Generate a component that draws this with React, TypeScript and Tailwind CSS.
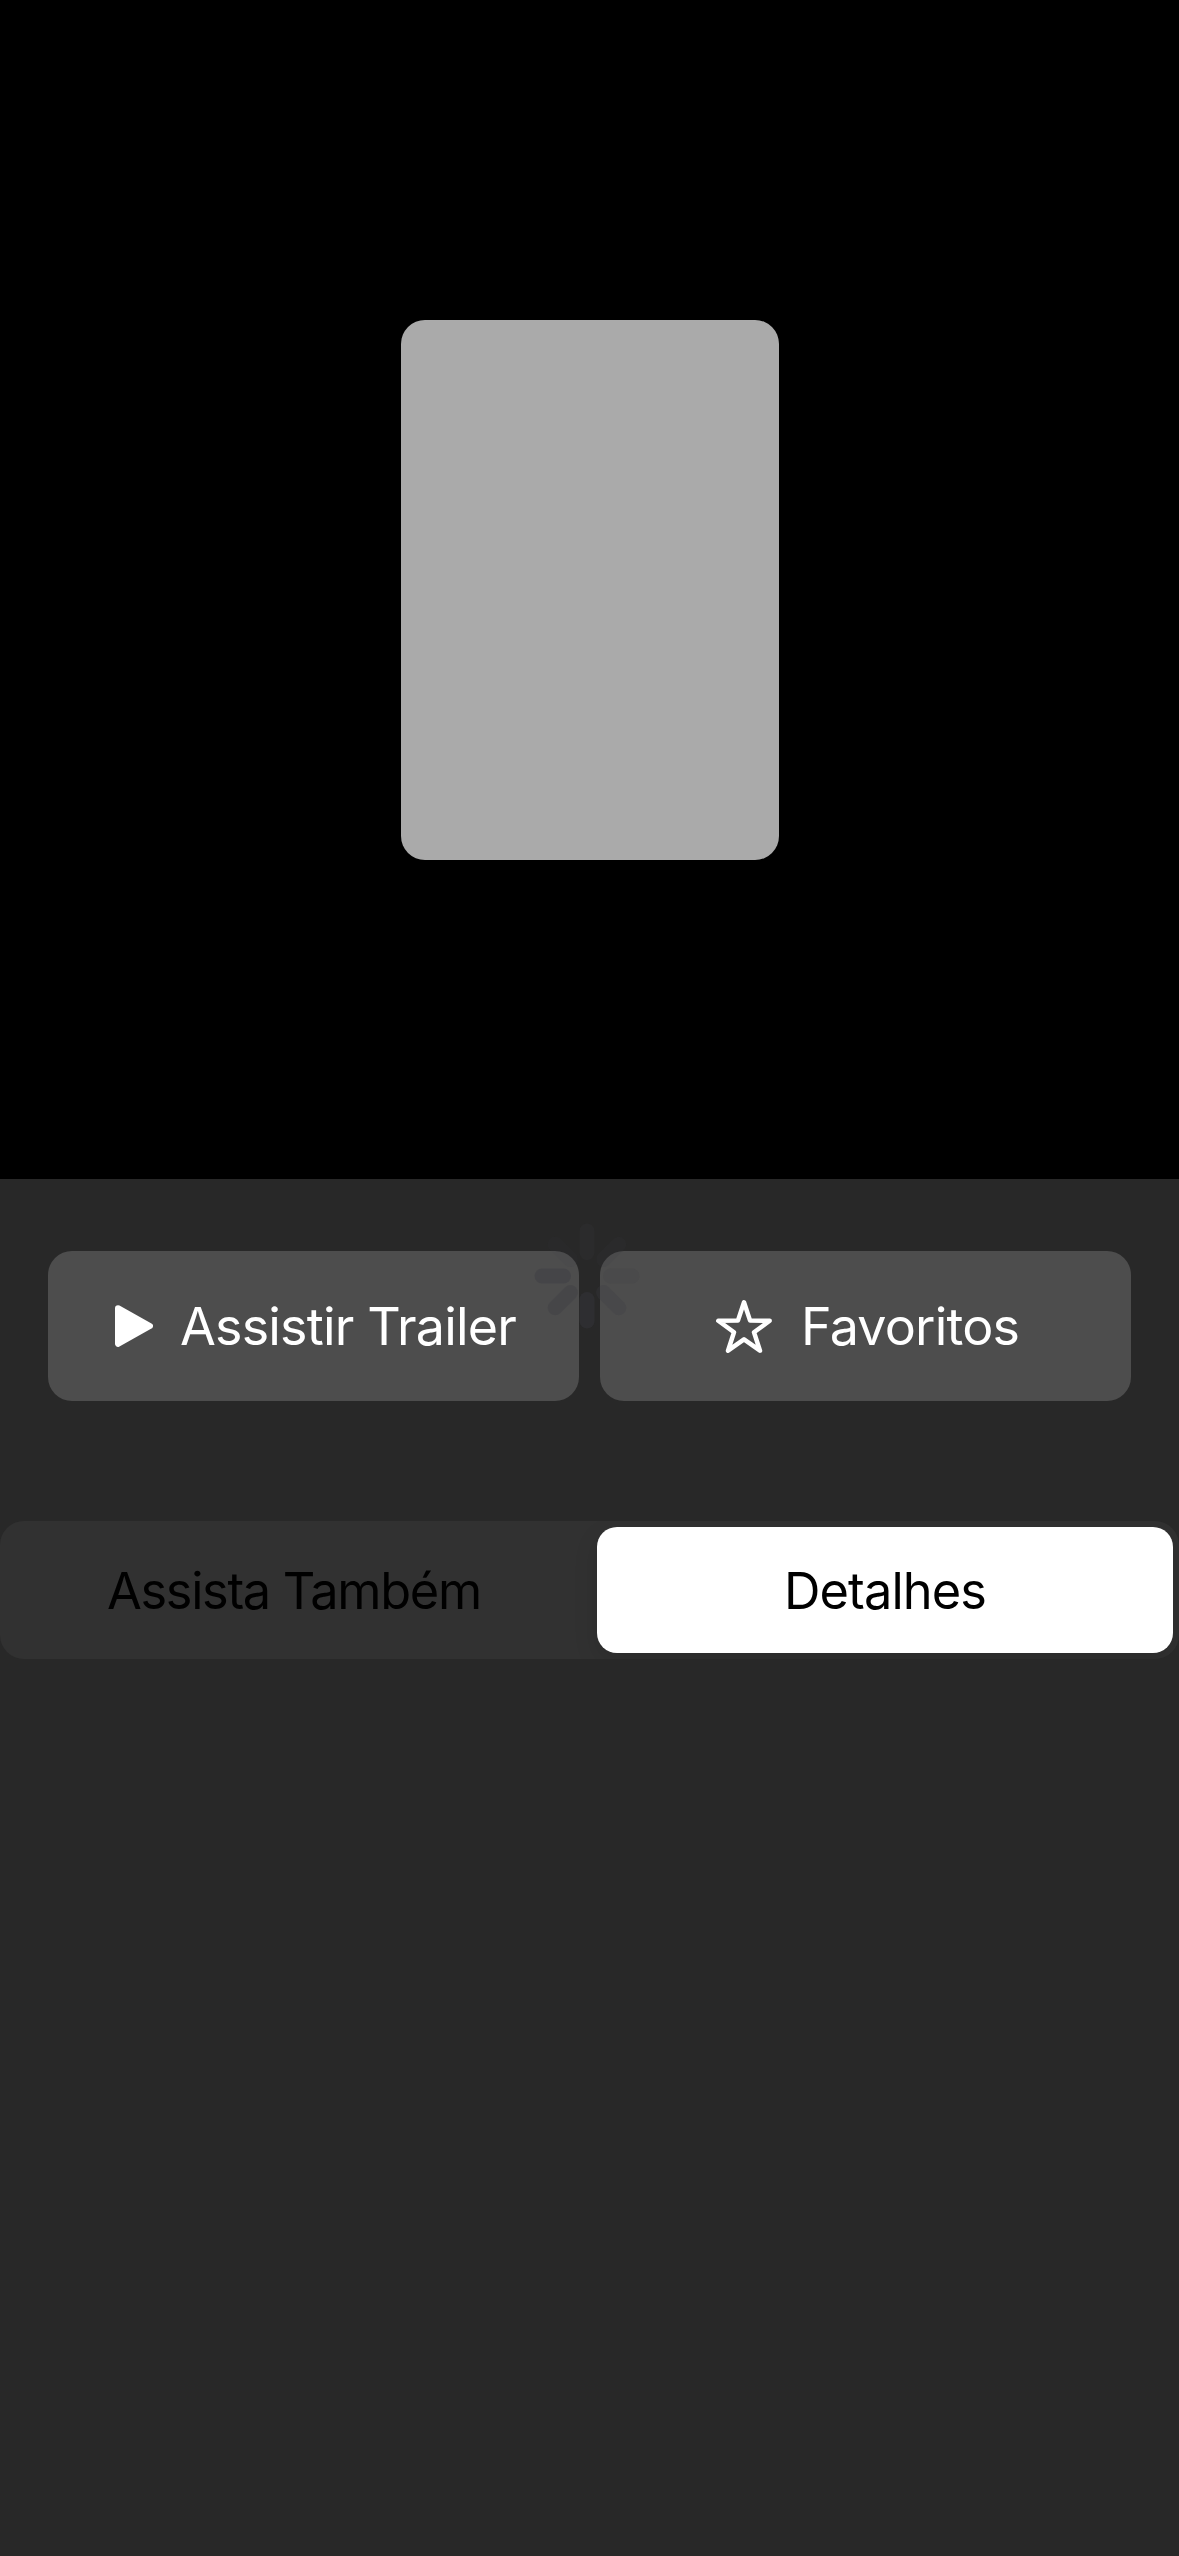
const SPOKES = [0.16, 0.12, 0.14, 0.28, 0.34, 0.38, 0.42, 0.1];

function Spinner() {
  return (
    <svg viewBox="-60 -60 120 120" className="pointer-events-none absolute left-[526.5px] top-[36.5px] size-[120px]">
      {SPOKES.map((opacity, i) => (
        <rect key={i} x="-7.5" y="-52.5" width="15" height="36.5" rx="7.5" fill="#3c3c43" opacity={opacity} transform={`rotate(${i * 45})`} />
      ))}
    </svg>
  );
}

function PlayIcon() {
  return (
    <svg viewBox="0 0 38 42" className="h-[42px] w-[38px] shrink-0" fill="#fff" stroke="#fff" strokeWidth="6" strokeLinejoin="round">
      <path d="M3 3.2 35 21 3 38.8Z" />
    </svg>
  );
}

function StarIcon() {
  return (
    <svg viewBox="0 0 56 53" className="h-[53px] w-[56px] shrink-0" fill="none" stroke="#fff" strokeWidth="4.5" strokeLinejoin="round">
      <path d="M28 2.3 34 20.4 53.7 20.8 38 32.3 44 50.7 28 39.4 12 50.7 18 32.3 2.3 20.8 22 20.4Z" />
    </svg>
  );
}

export default function App() {
  return (
    <main className="h-[2556px] w-[1179px] overflow-hidden bg-[#282828] font-['Inter',sans-serif]">
      <header className="flex h-[1179px] items-center justify-center bg-black pt-px">
        <div className="h-[540px] w-[378px] rounded-[24px] bg-[#aaaaaa]" />
      </header>
      <section className="relative pt-[72px]">
        <div className="flex justify-between px-12 text-[52px] leading-[64px] text-white">
          <button className="flex h-[150px] w-[531px] items-center rounded-[24px] bg-[#4d4d4d] pl-[67px]">
            <PlayIcon />
            <span className="ml-[27px] whitespace-nowrap pt-[2px] tracking-[-0.82px]">Assistir Trailer</span>
          </button>
          <button className="flex h-[150px] w-[531px] items-center rounded-[24px] bg-[#4d4d4d] pl-[116px]">
            <StarIcon />
            <span className="ml-[29px] whitespace-nowrap pt-[2px] tracking-[-0.8px]">Favoritos</span>
          </button>
        </div>
        <Spinner />
      </section>
      <div className="mt-[120px] flex h-[138px] overflow-hidden rounded-[24px] bg-[#313131] p-[6px] text-[50.5px] leading-[60px] text-black">
        <button className="flex w-[591px] items-center pl-[101px]">
          <span className="whitespace-nowrap pt-[2px] tracking-[-1.33px]">Assista Também</span>
        </button>
        <button className="flex flex-1 items-center rounded-[20px] bg-white pl-[187px] shadow-[0_9px_24px_rgba(0,0,0,0.12)]">
          <span className="whitespace-nowrap pt-[2px] tracking-[-0.9px]">Detalhes</span>
        </button>
      </div>
    </main>
  );
}
